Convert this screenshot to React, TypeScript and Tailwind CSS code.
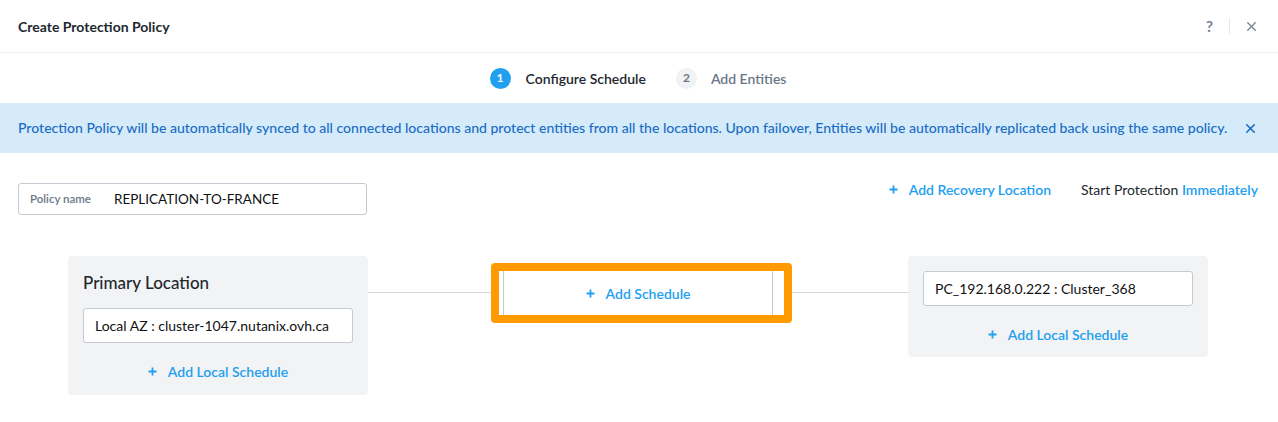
import { X } from "lucide-react";

const Plus = () => (
  <svg width="9" height="9" viewBox="0 0 9 9" className="shrink-0">
    <path d="M4.5 0.5v8M0.5 4.5h8" stroke="currentColor" strokeWidth="1.8" />
  </svg>
);

const LinkAction = ({ label }: { label: string }) => (
  <div className="flex items-center gap-[11px] text-[#22a0f0] text-[14px] font-semibold">
    <Plus />
    <span>{label}</span>
  </div>
);

export default function App() {
  return (
    <div className="w-[1278px] h-[422px] bg-white font-['Lato',sans-serif] overflow-hidden">
      {/* header */}
      <div className="h-[53px] flex items-center justify-between pl-[18px] pr-[19px] border-b border-[#eef0f2]">
        <div className="text-[14px] font-bold text-[#22272e]">Create Protection Policy</div>
        <div className="flex items-center text-[#7a8594]">
          <span className="text-[16px] font-bold mr-[16px]">?</span>
          <div className="w-px h-[16px] bg-[#e5e8eb] mr-[14px]" />
          <X size={15} strokeWidth={2.2} />
        </div>
      </div>

      {/* steps */}
      <div className="h-[50px] flex items-center justify-center pr-[2px]">
        <div className="w-[21px] h-[21px] rounded-full bg-[#22a0f0] text-white text-[12px] font-bold flex items-center justify-center">1</div>
        <span className="ml-[15px] text-[14px] font-semibold text-[#22272e]">Configure Schedule</span>
        <div className="ml-[30px] w-[21px] h-[21px] rounded-full bg-[#f0f2f4] text-[#6b7686] text-[12px] font-bold flex items-center justify-center">2</div>
        <span className="ml-[14px] text-[14px] font-semibold text-[#6b7686]">Add Entities</span>
      </div>

      {/* banner */}
      <div className="h-[50px] bg-[#d5ebfa] flex items-center justify-between pl-[18px] pr-[20px]">
        <span className="text-[14.05px] text-[#1a6cc4] font-medium whitespace-nowrap">
          Protection Policy will be automatically synced to all connected locations and protect entities from all the locations. Upon failover, Entities will be automatically replicated back using the same policy.
        </span>
        <X size={15} strokeWidth={2.6} className="text-[#1a6cc4]" />
      </div>

      {/* policy row */}
      <div className="flex items-center justify-between pl-[18px] pr-[20px] mt-[30px]">
        <div className="w-[349px] h-[32px] border border-[#c5cad2] rounded-[3px] flex items-center px-[11px]">
          <span className="text-[11.5px] text-[#6b7686] font-semibold w-[84px]">Policy name</span>
          <span className="text-[13.5px] text-[#111]">REPLICATION-TO-FRANCE</span>
        </div>
        <div className="flex items-center gap-[30px] -mt-[20px]">
          <LinkAction label="Add Recovery Location" />
          <div className="text-[14px] text-[#22272e]">
            Start Protection <span className="text-[#22a0f0] font-semibold">Immediately</span>
          </div>
        </div>
      </div>

      {/* canvas */}
      <div className="flex items-start pl-[68px] mt-[41px]">
        <div className="w-[300px] h-[139px] bg-[#f2f3f5] rounded-[4px] px-[15px] pt-[16px]">
          <div className="text-[17px] text-[#22272e] font-medium leading-[22px]">Primary Location</div>
          <div className="mt-[14px] h-[35px] bg-white border border-[#c5cad2] rounded-[3px] flex items-center px-[11px] text-[14px] text-[#111]">
            Local AZ : cluster-1047.nutanix.ovh.ca
          </div>
          <div className="mt-[18px] flex justify-center">
            <LinkAction label="Add Local Schedule" />
          </div>
        </div>
        <div className="w-[123px] h-px bg-[#d3d7dd] mt-[36px]" />
        <div className="w-[301px] h-[60px] mt-[7px] border-[8px] border-[#ff9a00] rounded-[4px] bg-white">
          <div className="ml-[4px] w-[270px] h-full border-x border-[#c5cad2] flex items-center justify-center">
            <LinkAction label="Add Schedule" />
          </div>
        </div>
        <div className="w-[116px] h-px bg-[#d3d7dd] mt-[36px]" />
        <div className="w-[300px] h-[101px] bg-[#f2f3f5] rounded-[4px] px-[15px] pt-[15px]">
          <div className="h-[35px] bg-white border border-[#c5cad2] rounded-[3px] flex items-center px-[11px] text-[14px] text-[#111]">
            PC_192.168.0.222 : Cluster_368
          </div>
          <div className="mt-[18px] flex justify-center">
            <LinkAction label="Add Local Schedule" />
          </div>
        </div>
      </div>
    </div>
  );
}
